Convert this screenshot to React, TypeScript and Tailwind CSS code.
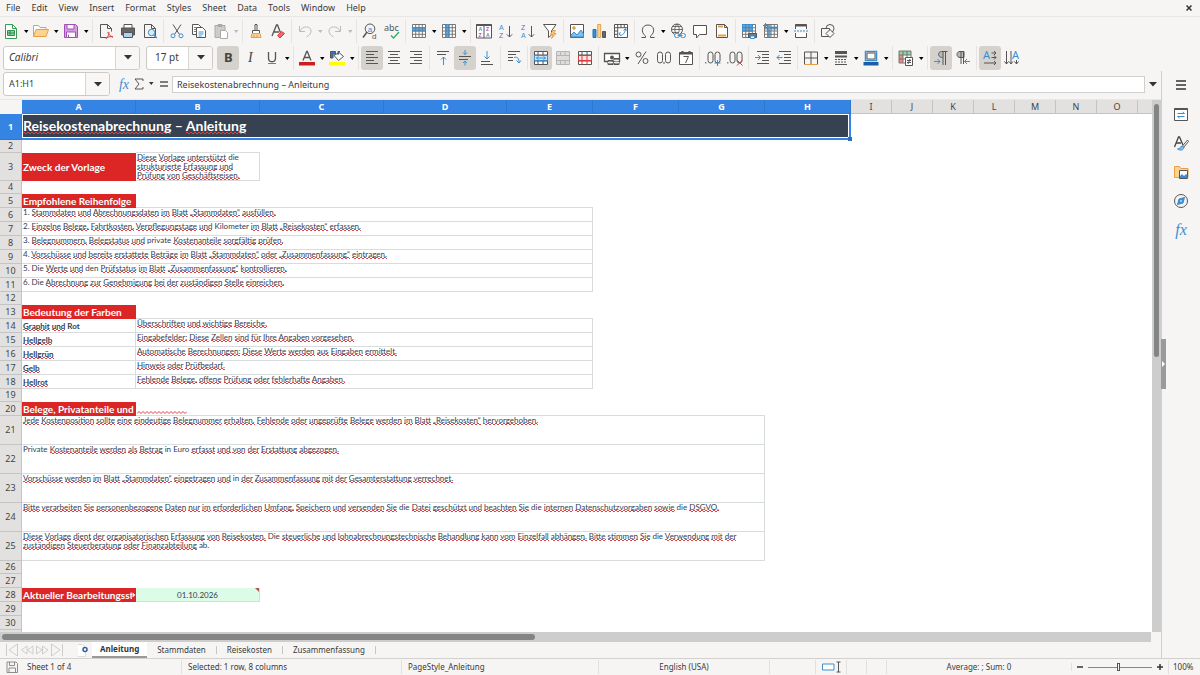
import React from "react";
import clsx from "clsx";

const GRAY = "#555555";
const BLUE = "#3a8fd1";
const ORANGE = "#e9a045";
const PURPLE = "#a04fb5";
const RED = "#dd3b3b";

interface Tool {
  icon: string;
  label: string;
  menu?: boolean;
  active?: boolean;
  disabled?: boolean;
}

interface Cell {
  text?: string;
  kind?: "title" | "heading" | "label" | "body" | "date" | "overflow";
  span?: number;
  clipped?: boolean;
}

interface Row {
  size: "tiny" | "normal" | "medium" | "tall" | "title";
  cells?: Cell[];
  top?: boolean;
}

const Grid = ({ color = GRAY }: { color?: string }) => (
  <path
    d="M1.5 1.5h13v13h-13zM4.7 1.5v13M8 1.5v13M11.3 1.5v13M1.5 4.7h13M1.5 8h13M1.5 11.3h13"
    stroke={color}
  />
);

const Letters = ({ top, bottom }: { top: string; bottom: string }) => (
  <g stroke="none" fontSize="7" fontFamily="Liberation Sans, sans-serif">
    <text x="1" y="6.500" fill={top === "A" ? BLUE : PURPLE}>
      {top}
    </text>
    <text x="1" y="15" fill={bottom === "A" ? BLUE : PURPLE}>
      {bottom}
    </text>
  </g>
);

const icons: Record<string, React.ReactNode> = {
  new: (
    <>
      <path d="M2.5 1.5h7l4 4v10h-11z" stroke="#3d9b58" fill="#fff" />
      <path d="M9.5 1.5v4h4" stroke="#3d9b58" />
      <path d="M4.5 7.5h7v5h-7zM4.5 10h7M7 7.500v5" stroke="#2f8f4b" fill="#8fd3a2" />
    </>
  ),
  open: (
    <>
      <path d="M.5 13.500v-11h5l1.500 2h6v2" stroke={ORANGE} fill="#fff" />
      <path d="M.5 13.500l2.500-7h12.500l-2.500 7z" stroke={ORANGE} fill="#fbd28f" />
    </>
  ),
  save: (
    <>
      <path d="M1.5 1.5h11l2 2v11h-13z" stroke={PURPLE} fill="#d69be3" />
      <path d="M4 1.500h7v4.500h-7z" stroke={PURPLE} fill="#fff" />
      <path d="M3.500 9h9v5.500h-9z" stroke={PURPLE} fill="#fff" />
      <path d="M5.500 11.500v3" stroke={PURPLE} />
    </>
  ),
  pdf: (
    <>
      <path d="M2.500 1.500h7l4 4v3M2.500 1.500v13h6M9.500 1.500v4h4" stroke={GRAY} />
      <path d="M8 15.500c3-3 3.500-6 2.500-6.500s-1 3 4.500 5c-3-1-5 0-7 1.500z" stroke={RED} />
    </>
  ),
  print: (
    <>
      <path d="M4 5v-3.500h8v3.500" stroke={GRAY} fill="#fff" />
      <path d="M1.500 5h13v7h-13z" stroke={GRAY} fill="#666" />
      <path d="M3.500 9.500h9v5h-9z" stroke={GRAY} fill="#a9d4f5" />
    </>
  ),
  preview: (
    <>
      <path d="M2.500 1.500h7l4 4v9h-11zM9.500 1.500v4h4" stroke={GRAY} />
      <circle cx="9.500" cy="9.500" r="3.200" stroke={BLUE} fill="#d7ebfa" />
      <path d="M11.800 12l3 3" stroke={BLUE} strokeWidth="1.500" />
    </>
  ),
  cut: (
    <>
      <path d="M4 1.500l6.500 10M12 1.500l-6.500 10" stroke={GRAY} />
      <circle cx="4" cy="12.800" r="2" stroke={BLUE} />
      <circle cx="12" cy="12.800" r="2" stroke={BLUE} />
    </>
  ),
  copy: (
    <>
      <path d="M1.500 1.500h6l3 3v7h-9z" stroke={GRAY} fill="#fff" />
      <path d="M5.500 4.500h6l3 3v7h-9z" stroke={GRAY} fill="#fff" />
      <path d="M7.500 9h5M7.500 11h5M7.500 13h3M3 4.500h2M3 6.500h2M3 8.500h2" stroke={BLUE} />
    </>
  ),
  paste: (
    <>
      <path d="M2 2.500h10v12h-10z" stroke="#aaa" fill="#ccc" />
      <path d="M5 1.500h4v2h-4z" stroke="#aaa" />
      <path d="M7.500 7.500h5l2 2v6h-7z" stroke="#aaa" fill="#fff" />
    </>
  ),
  brush: (
    <>
      <path d="M7 1.500h2v6h-2zM4.500 7.500h7v3h-7z" stroke={GRAY} fill="#fff" />
      <path d="M4 10.500h8l1 4h-10z" stroke={ORANGE} fill="#fbd28f" />
      <path d="M6 12v2.500M9 12v2.500" stroke={ORANGE} />
    </>
  ),
  clear: (
    <>
      <path d="M2 13l4.500-11h1l3.500 9M4 9h5" stroke={GRAY} strokeWidth="1.300" />
      <path d="M7.500 12.500l4-4 3 2-4.500 4.500z" stroke={RED} fill="#ef6a6a" />
    </>
  ),
  undo: <path d="M2.500 3v5.500h5.500M3 8c3-6 11-5 11 0 0 3-2 4-4.500 6" stroke="#bbb" />,
  redo: <path d="M13.500 3v5.500h-5.500M13 8c-3-6-11-5-11 0 0 3 2 4 4.500 6" stroke="#bbb" />,
  find: (
    <>
      <circle cx="8" cy="5.800" r="4.800" stroke={GRAY} />
      <path d="M5 9l-4 5.500" stroke={GRAY} strokeWidth="1.500" />
      <g stroke="none" fontSize="8" fontFamily="Liberation Sans, sans-serif">
        <text x="5.800" y="8.500" fill={BLUE}>a</text>
        <text x="10" y="16" fill={GRAY}>d</text>
      </g>
    </>
  ),
  spell: (
    <>
      <text x="0" y="8" fontSize="9" fill={GRAY} stroke="none" fontFamily="Noto Sans, sans-serif">
        abc
      </text>
      <path d="M7 12.500l2.500 2.500 5.500-6" stroke="#2fae6b" strokeWidth="1.300" />
    </>
  ),
  row: (
    <>
      <path d="M1.500 1.500h13v13h-13z" fill="#fff" stroke="none" />
      <path d="M1.500 4.700h13v3.300h-13z" fill="#5aaae6" stroke="none" />
      <Grid color="#777" />
      <path d="M1.500 4.700h13v3.300h-13z" stroke={BLUE} />
    </>
  ),
  column: (
    <>
      <path d="M1.500 1.500h13v13h-13z" fill="#fff" stroke="none" />
      <path d="M4.700 1.500h3.300v13h-3.300z" fill="#5aaae6" stroke="none" />
      <Grid color="#777" />
      <path d="M4.700 1.500h3.300v13h-3.300z" stroke={BLUE} />
    </>
  ),
  sort: (
    <>
      <path d="M.5 1.500h15v13.500h-15zM8 1.500v13.500" stroke={GRAY} fill="#fff" />
      <path d="M.5 2h15" stroke={GRAY} strokeWidth="2" />
      <g stroke="none" fontSize="5" fontWeight="700" fontFamily="Liberation Sans, sans-serif">
        <text x="2.500" y="7.800" fill={BLUE}>A</text>
        <text x="2.500" y="13.800" fill={PURPLE}>Z</text>
        <text x="10" y="7.800" fill={PURPLE}>Z</text>
        <text x="10" y="13.800" fill={BLUE}>A</text>
      </g>
    </>
  ),
  ascending: (
    <>
      <Letters top="A" bottom="Z" />
      <path d="M11.500 3v11M8.800 11.300l2.700 2.700 2.700-2.700" stroke={GRAY} />
    </>
  ),
  descending: (
    <>
      <Letters top="Z" bottom="A" />
      <path d="M11.500 3v11M8.800 11.300l2.700 2.700 2.700-2.700" stroke={GRAY} />
    </>
  ),
  filter: (
    <>
      <path d="M1.500 1.500h12.500l-4.500 6.500v4l-3 2.500v-6.500z" stroke={GRAY} fill="#fff" />
      <path d="M11 7.500l-2.500 4h2.500l-1.500 4 4.500-5h-2.500l2-3z" stroke={ORANGE} fill="#fbd28f" />
    </>
  ),
  image: (
    <>
      <path d="M1.500 1.500h13v13h-13z" stroke={GRAY} fill="#fff" />
      <path d="M2 14v-2l3-3 3 3 4-5 2.500 4v3z" fill="#7fbdec" stroke={BLUE} />
      <circle cx="5" cy="5" r="1.300" fill={ORANGE} stroke={ORANGE} />
    </>
  ),
  chart: (
    <>
      <path d="M2 6.500h3v8h-3z" fill={BLUE} stroke="#2a72ad" />
      <path d="M6.700 1.500h3v13h-3z" fill="#fbd28f" stroke={ORANGE} />
      <path d="M11.500 8.500h3v6h-3z" fill="#666" stroke={GRAY} />
    </>
  ),
  pivot: (
    <>
      <path d="M1.500 1.500h13v13h-13z" fill="#fff" stroke={GRAY} />
      <path d="M1.500 4.700h13M4.700 1.500v13M8 1.500v3M11.300 1.500v3M1.500 8h3M1.500 11.300h3" stroke={GRAY} />
      <path d="M6.500 11c0 2 5 2 6-5M10.500 7.500l2-2 1 2M7.500 9l-1.500 2 1.500 1.500" stroke={BLUE} />
    </>
  ),
  omega: (
    <path d="M1.500 14.500h4v-1.500c-5-3.500-4-11 2.500-11s7.500 7.500 2.500 11v1.500h4" stroke={GRAY} />
  ),
  link: (
    <>
      <circle cx="7" cy="6.500" r="5.500" stroke={GRAY} />
      <path d="M7 1c-3 4-3 7 0 11M7 1c3 4 3 7 0 11M1.500 6.500h11M2.500 3.500h9M2.500 9.500h6" stroke={GRAY} strokeWidth=".8" />
      <rect x="4.500" y="10.500" width="5" height="4" rx="2" stroke={BLUE} fill="#f6f5f4" />
      <rect x="10.500" y="10.500" width="5" height="4" rx="2" stroke={BLUE} fill="#f6f5f4" />
      <path d="M7.500 12.500h5" stroke={BLUE} />
    </>
  ),
  comment: <path d="M1.500 2.500h13v9h-7l-3 3.500v-3.500h-3z" stroke={GRAY} fill="#fff" />,
  header: (
    <>
      <path d="M2.500 1.500h8l3 3v10h-11zM10.500 1.500v3h3" stroke={GRAY} fill="#fff" />
      <path d="M4 3.500h5M4 12.500h8" stroke={ORANGE} strokeWidth="2" />
    </>
  ),
  printarea: (
    <>
      <path d="M1.500 1.500h13v13h-13z" fill="#fff" stroke="none" />
      <path d="M1.500 1.500h10v7h-10z" fill="#5aaae6" stroke="none" />
      <Grid color="#777" />
      <path d="M1.500 1.500h9.800v6.500h-9.800z" stroke={BLUE} />
      <path d="M7.500 10.500h8v4h-8z" fill="#777" stroke={GRAY} />
      <path d="M9.500 13h4v2.500h-4z" fill="#fff" stroke={BLUE} />
    </>
  ),
  freeze: (
    <>
      <path d="M1.500 1.500h13v13h-13z" fill="#fff" stroke="none" />
      <path d="M1.500 5h13M6 1.500v13" stroke="#5aaae6" strokeWidth="3" />
      <Grid color="#777" />
      <path d="M0 2.500h5M2.500 0v5" stroke={BLUE} />
    </>
  ),
  split: (
    <>
      <path d="M2.500 6v-4.500h11v4.500M2.500 10v4.500h11v-4.500" stroke={GRAY} fill="#fff" />
      <path d="M2.500 2.500h11" stroke={GRAY} strokeWidth="2" />
      <path d="M1 8h14" stroke={BLUE} strokeDasharray="2 1" />
    </>
  ),
  shapes: (
    <>
      <circle cx="10" cy="5.500" r="4" stroke={GRAY} />
      <path d="M1.500 5.500h8v8h-8z" stroke={GRAY} fill="#f6f5f4" />
      <path d="M10 6.500l4 4-4 4-4-4z" stroke={GRAY} fill="#f6f5f4" />
    </>
  ),
  left: <path d="M2 1.500h12M2 4.500h8M2 7.500h12M2 10.500h8M2 13.500h12" stroke={GRAY} />,
  center: <path d="M2 1.500h12M4 4.500h8M2 7.500h12M4 10.500h8M2 13.500h12" stroke={GRAY} />,
  right: <path d="M2 1.500h12M6 4.500h8M2 7.500h12M6 10.500h8M2 13.500h12" stroke={GRAY} />,
  top: (
    <>
      <path d="M2 1.500h12M2 4.500h9" stroke={GRAY} />
      <path d="M8.500 15v-8M6 9.500l2.500-2.500 2.500 2.500" stroke={BLUE} />
    </>
  ),
  middle: (
    <>
      <path d="M2 6.500h12M2 9.500h9" stroke={GRAY} />
      <path d="M8 0v4.500M6 2.500l2 2 2-2M8 15.500v-4.500M6 13l2-2 2 2" stroke={BLUE} />
    </>
  ),
  bottom: (
    <>
      <path d="M2 11.500h9M2 14.500h12" stroke={GRAY} />
      <path d="M8 1v8M5.500 6.500l2.500 2.500 2.500-2.500" stroke={BLUE} />
    </>
  ),
  wrap: (
    <>
      <path d="M2 1.500h12M2 4.500h8M2 7.500h5M2 10.500h5" stroke={GRAY} />
      <path d="M8 7.500c4-1 5 1 5 5.500M10.500 10.500l2.500 2.500 2-2.500" stroke={BLUE} />
    </>
  ),
  merge: (
    <>
      <path d="M1.500 1.500h13v13h-13zM1.500 5h13M1.500 11h13M5 1.500v3.500M10 1.500v3.500M5 11v3.500M10 11v3.500" stroke={GRAY} fill="#fff" />
      <path d="M1.500 5.500h13v5h-13z" fill="#cde6f9" stroke={BLUE} />
      <path d="M3.500 8h9M5.500 6.500l-2 1.500 2 1.500M10.500 6.500l2 1.500-2 1.500" stroke={BLUE} />
    </>
  ),
  mergecells: (
    <path d="M1.500 1.500h13v13h-13zM1.500 5.500h13M1.500 10.500h13M5.500 1.500v4M10 1.500v4M5.500 10.500v4M10 10.500v4" stroke="#b5b5b5" fill="#ddd" />
  ),
  unmerge: (
    <>
      <path d="M1.500 1.500h13v13h-13zM1.500 5h13M1.500 11h13M5 1.500v3.500M10 1.500v3.500" stroke={GRAY} fill="#fff" />
      <path d="M1.500 5.500h13v5h-13zM5 5.500v9M10 5.500v9" stroke={RED} fill="#fde3e3" />
    </>
  ),
  currency: (
    <>
      <path d="M.5 3.500h15v8h-15z" stroke={GRAY} fill="#fff" strokeWidth="1.300" />
      <circle cx="8" cy="7.500" r="2" fill={GRAY} stroke="none" />
      <path d="M4 10.500h5v4h-5zM10 8.500h5v6h-5z" fill="#999" stroke={GRAY} />
      <path d="M4 12.500h5M10 10.500h5M10 12.500h5" stroke="#eee" />
    </>
  ),
  date: (
    <>
      <path d="M1.500 2.500h13v12h-13z" stroke={GRAY} fill="#fff" />
      <path d="M1.500 3.500h13M4.500 1v3M11.500 1v3" stroke={GRAY} strokeWidth="2" />
      <path d="M5.500 6.500h5l-3 6.500" stroke={GRAY} />
    </>
  ),
  indent: (
    <>
      <path d="M3 1.500h12M8 4.500h7M8 7.500h7M8 10.500h7M3 13.500h12" stroke={GRAY} />
      <path d="M1 7.500h5.500M4 5l2.500 2.500-2.500 2.500" stroke={BLUE} />
    </>
  ),
  outdent: (
    <>
      <path d="M3 1.500h12M8 4.500h7M8 7.500h7M8 10.500h7M3 13.500h12" stroke={GRAY} />
      <path d="M6.500 7.500h-5.500M3.500 5l-2.500 2.500 2.500 2.500" stroke={BLUE} />
    </>
  ),
  borders: (
    <>
      <path d="M1.500 2v12.500M8 2v12.500M14.500 2v12.500M1.500 2h13M1.500 8h13" stroke={GRAY} />
      <path d="M1.500 14.500h13" stroke={ORANGE} />
    </>
  ),
  lines: (
    <>
      <path d="M2 2.500h12" stroke={GRAY} strokeWidth="3" />
      <path d="M2 6.500h12" stroke={GRAY} strokeWidth="2" />
      <path d="M2 9.500h12M2 12h12" stroke={GRAY} strokeDasharray="2 1" />
      <path d="M2 14.500h12" stroke={GRAY} />
    </>
  ),
  bordercolor: (
    <>
      <path d="M2.500 1.500h11v9h-11z" stroke={BLUE} strokeWidth="1.500" />
      <path d="M4 3h8v6h-8z" stroke={GRAY} fill="#fff" />
      <path d="M.5 12h15v3.500h-15z" fill="#1c5fa5" stroke="none" />
    </>
  ),
  conditional: (
    <>
      <path d="M1 1h12v12h-12z" fill="#fff" stroke="none" />
      <path d="M1 1h12v4h-12z" fill="#8fd3a2" stroke="none" />
      <path d="M1 5h4v8h-4z" fill="#ef8585" stroke="none" />
      <path d="M1 1h12v12h-12zM5 1v12M9 1v12M1 5h12M1 9h12" stroke="#777" />
      <path d="M7.500 7.500h7v8h-7z" fill="#fff" stroke={GRAY} />
      <path d="M9 10.500h4M9 12.500h4M12 9l-2 5" stroke={GRAY} />
    </>
  ),
  ltr: (
    <>
      <path d="M10.500 1.500h-2c-4 0-4 6 0 6h2z" fill="#bbb" stroke="none" />
      <path d="M14.500 1.500h-6c-4 0-4 6 1 6M10 2v13M12.500 2v13" stroke={GRAY} />
      <path d="M1 11.500h6M4.500 9l2.500 2.500-2.500 2.500" stroke={BLUE} />
    </>
  ),
  rtl: (
    <>
      <path d="M9 1.500h-4c-4 0-4 6 0 6h4z" fill="#bbb" stroke={GRAY} />
      <path d="M6 2v12M8.500 2v12" stroke={GRAY} />
      <path d="M15 11.500h-5.500M12 9l-2.500 2.500 2.500 2.500" stroke={BLUE} />
    </>
  ),
  horizontal: (
    <>
      <text x="1" y="9" fontSize="11" fill={BLUE} stroke="none" fontFamily="Noto Sans, sans-serif">A</text>
      <path d="M9.500 3h4.500M12 1l2 2-2 2M9.500 7.500h4.500M12 5.500l2 2-2 2M2 13h12M12 11l2 2-2 2" stroke={GRAY} />
    </>
  ),
  vertical: (
    <>
      <text x="8" y="9" fontSize="11" fill={BLUE} stroke="none" fontFamily="Noto Sans, sans-serif">A</text>
      <path d="M2.500 1v13M.5 11.500l2 2.500 2-2.500M7 1v13M5 11.500l2 2.500 2-2.500M12.500 10v4M10.500 11.500l2 2.500 2-2.500" stroke={GRAY} />
    </>
  ),
  highlight: (
    <>
      <path d="M5 5.500l5-3 4.500 4-5 4z" stroke={GRAY} fill="#fff" />
      <path d="M9 5v-3.500h2M1.500 1.500h5v2.500h-2.500v4h-2.500z" stroke={GRAY} fill="#2f7cc0" />
      <path d="M0 12h16v3.500h-16z" fill="#ffff00" stroke="none" />
    </>
  ),
  fontcolor: (
    <>
      <path d="M4 10.500l3.700-9h.6l3.700 9M5.500 7.500h5" stroke={GRAY} strokeWidth="1.300" />
      <path d="M0 12h16v3.500h-16z" fill="#c9211e" stroke="none" />
    </>
  ),
  underline: (
    <>
      <path d="M4.500 2v6c0 5 7 5 7 0v-6" stroke={GRAY} strokeWidth="1.300" />
      <path d="M4 13.500h8" stroke={BLUE} />
    </>
  ),
  bold: (
    <text x="4" y="12" fontSize="13" fontWeight="700" fill="#444" stroke="none" fontFamily="Noto Sans, sans-serif">B</text>
  ),
  italic: (
    <text x="6" y="12" fontSize="14" fontStyle="italic" fill="#444" stroke="none" fontFamily="Liberation Serif, serif">I</text>
  ),
  percent: (
    <>
      <circle cx="4.500" cy="4.500" r="2.500" stroke={GRAY} />
      <circle cx="11.500" cy="11" r="2.500" stroke={GRAY} />
      <path d="M12 1.500l-8 12.500" stroke={GRAY} />
    </>
  ),
  number: (
    <>
      <rect x="1.500" y="2" width="5" height="11" rx="2.500" stroke={GRAY} />
      <rect x="9.500" y="2" width="5" height="11" rx="2.500" stroke={GRAY} />
      <path d="M8 12v2" stroke={GRAY} />
    </>
  ),
  adddecimal: (
    <>
      <path d="M.8 12v1.500" stroke={GRAY} />
      <rect x="3" y="2" width="5" height="11" rx="2.500" stroke={GRAY} />
      <rect x="10" y="2" width="5" height="11" rx="2.500" stroke={GRAY} />
      <path d="M12.500 10v6M9.500 13h6" stroke={BLUE} />
    </>
  ),
  deldecimal: (
    <>
      <path d="M.8 12v1.500" stroke={GRAY} />
      <rect x="3" y="2" width="5" height="11" rx="2.500" stroke={GRAY} />
      <rect x="10" y="2" width="5" height="11" rx="2.500" stroke={GRAY} />
      <path d="M10 10l5.500 5.500M15.500 10l-5.500 5.500" stroke={RED} />
    </>
  ),
  menu: <path d="M3 4h10M3 8h10M3 12h10" stroke="#333" strokeWidth="1.500" />,
  properties: (
    <>
      <path d="M1.500 2.500h13v12h-13z" stroke={GRAY} fill="#fff" />
      <path d="M1.500 3h13" stroke={GRAY} strokeWidth="2" />
      <path d="M4.500 7.500h7l-2-1.500M11.500 10.500h-7l2 1.500" stroke={BLUE} />
    </>
  ),
  styles: (
    <>
      <path d="M1.500 12l4-10h1l3.500 8M3 8h5" stroke="#444" strokeWidth="1.300" />
      <path d="M14.500 5l-5 6 1 1.500 5-6z" stroke={GRAY} fill="#fff" />
      <path d="M9.500 11c-3 0-1.500 3-5 3 3 2 6 1 6.500-1.500z" stroke={BLUE} fill="#7fbdec" />
    </>
  ),
  gallery: (
    <>
      <path d="M1.500 13.500v-11h5l1.500 2h7v9z" stroke={ORANGE} fill="#fbd28f" />
      <path d="M6.500 6.500h8v8h-8z" stroke={GRAY} fill="#fff" />
      <path d="M7 14v-2l2-2 2 2 2-2 1.500 1.500v2.500z" fill={BLUE} stroke="none" />
    </>
  ),
  navigator: (
    <>
      <circle cx="8" cy="8" r="6.500" stroke={GRAY} />
      <path d="M11.500 4.500l-1.500 5.500-5.500 1.500 1.500-5.500z" fill={BLUE} stroke={BLUE} />
      <path d="M8 7l1 1-1 1-1-1z" fill="#fff" stroke="none" />
    </>
  ),
};

const toolbar: Tool[][] = [
  [
    { icon: "new", label: "New", menu: true },
    { icon: "open", label: "Open", menu: true },
    { icon: "save", label: "Save", menu: true },
  ],
  [
    { icon: "pdf", label: "Export as PDF" },
    { icon: "print", label: "Print" },
    { icon: "preview", label: "Print Preview" },
  ],
  [
    { icon: "cut", label: "Cut" },
    { icon: "copy", label: "Copy" },
    { icon: "paste", label: "Paste", menu: true, disabled: true },
  ],
  [
    { icon: "brush", label: "Clone Formatting" },
    { icon: "clear", label: "Clear Direct Formatting" },
  ],
  [
    { icon: "undo", label: "Undo", menu: true, disabled: true },
    { icon: "redo", label: "Redo", menu: true, disabled: true },
  ],
  [
    { icon: "find", label: "Find and Replace" },
    { icon: "spell", label: "Spelling" },
  ],
  [
    { icon: "row", label: "Row", menu: true },
    { icon: "column", label: "Column", menu: true },
  ],
  [
    { icon: "sort", label: "Sort" },
    { icon: "ascending", label: "Sort Ascending" },
    { icon: "descending", label: "Sort Descending" },
    { icon: "filter", label: "AutoFilter" },
  ],
  [
    { icon: "image", label: "Insert Image" },
    { icon: "chart", label: "Insert Chart" },
    { icon: "pivot", label: "Insert Pivot Table" },
  ],
  [
    { icon: "omega", label: "Special Character", menu: true },
    { icon: "link", label: "Insert Hyperlink" },
    { icon: "comment", label: "Insert Comment" },
    { icon: "header", label: "Headers and Footers" },
  ],
  [
    { icon: "printarea", label: "Define Print Area" },
    { icon: "freeze", label: "Freeze Rows and Columns", menu: true },
    { icon: "split", label: "Split Window" },
  ],
  [{ icon: "shapes", label: "Show Draw Functions" }],
];

const formatting: Tool[][] = [
  [
    { icon: "bold", label: "Bold", active: true },
    { icon: "italic", label: "Italic" },
    { icon: "underline", label: "Underline", menu: true },
  ],
  [
    { icon: "fontcolor", label: "Font Color", menu: true },
    { icon: "highlight", label: "Background Color", menu: true },
  ],
  [
    { icon: "left", label: "Align Left", active: true },
    { icon: "center", label: "Center Horizontally" },
    { icon: "right", label: "Align Right" },
  ],
  [
    { icon: "top", label: "Align Top" },
    { icon: "middle", label: "Center Vertically", active: true },
    { icon: "bottom", label: "Align Bottom" },
  ],
  [{ icon: "wrap", label: "Wrap Text" }],
  [
    { icon: "merge", label: "Merge and Center Cells", active: true },
    { icon: "mergecells", label: "Merge Cells", disabled: true },
    { icon: "unmerge", label: "Unmerge Cells" },
  ],
  [
    { icon: "currency", label: "Format as Currency", menu: true },
    { icon: "percent", label: "Format as Percent" },
    { icon: "number", label: "Format as Number" },
    { icon: "date", label: "Format as Date" },
  ],
  [
    { icon: "adddecimal", label: "Add Decimal Place" },
    { icon: "deldecimal", label: "Delete Decimal Place" },
  ],
  [
    { icon: "indent", label: "Increase Indent" },
    { icon: "outdent", label: "Decrease Indent" },
  ],
  [
    { icon: "borders", label: "Borders", menu: true },
    { icon: "lines", label: "Border Style", menu: true },
    { icon: "bordercolor", label: "Border Color", menu: true },
  ],
  [{ icon: "conditional", label: "Conditional", menu: true }],
  [
    { icon: "ltr", label: "Left-To-Right", active: true },
    { icon: "rtl", label: "Right-To-Left" },
  ],
  [
    { icon: "horizontal", label: "Text Direction Horizontal", active: true },
    { icon: "vertical", label: "Text Direction Vertical" },
  ],
];

const empty: Row = { size: "tiny" };
const step = (text: string): Row => ({ size: "normal", cells: [{ kind: "body", text, span: 5 }] });
const legend = (label: string, text: string): Row => ({
  size: "normal",
  cells: [
    { kind: "label", text: label },
    { kind: "body", text, span: 4 },
  ],
});
const note = (text: string): Row => ({ size: "tall", cells: [{ kind: "body", text, span: 7 }] });

const rows: Row[] = [
  { size: "title", cells: [{ kind: "title", text: "Reisekostenabrechnung – Anleitung", span: 8 }] },
  empty,
  {
    size: "medium",
    top: true,
    cells: [
      { kind: "heading", text: "Zweck der Vorlage" },
      { kind: "body", text: "Diese Vorlage unterstützt die strukturierte Erfassung und Prüfung von Geschäftsreisen." },
    ],
  },
  empty,
  { size: "normal", cells: [{ kind: "heading", text: "Empfohlene Reihenfolge" }] },
  { ...step("1. Stammdaten und Abrechnungsdaten im Blatt „Stammdaten“ ausfüllen."), top: true },
  step("2. Einzelne Belege, Fahrtkosten, Verpflegungstage und Kilometer im Blatt „Reisekosten“ erfassen."),
  step("3. Belegnummern, Belegstatus und private Kostenanteile sorgfältig prüfen."),
  step("4. Vorschüsse und bereits erstattete Beträge im Blatt „Stammdaten“ oder „Zusammenfassung“ eintragen."),
  step("5. Die Werte und den Prüfstatus im Blatt „Zusammenfassung“ kontrollieren."),
  step("6. Die Abrechnung zur Genehmigung bei der zuständigen Stelle einreichen."),
  empty,
  { size: "normal", cells: [{ kind: "heading", text: "Bedeutung der Farben" }] },
  { ...legend("Graphit und Rot", "Überschriften und wichtige Bereiche."), top: true },
  legend("Hellgelb", "Eingabefelder: Diese Zellen sind für Ihre Angaben vorgesehen."),
  legend("Hellgrün", "Automatische Berechnungen: Diese Werte werden aus Eingaben ermittelt."),
  legend("Gelb", "Hinweis oder Prüfbedarf."),
  legend("Hellrot", "Fehlende Belege, offene Prüfung oder fehlerhafte Angaben."),
  empty,
  { size: "normal", cells: [{ kind: "heading", text: "Belege, Privatanteile und" }, { kind: "overflow" }] },
  {
    ...note("Jede Kostenposition sollte eine eindeutige Belegnummer erhalten. Fehlende oder ungeprüfte Belege werden im Blatt „Reisekosten“ hervorgehoben."),
    top: true,
  },
  note("Private Kostenanteile werden als Betrag in Euro erfasst und von der Erstattung abgezogen."),
  note("Vorschüsse werden im Blatt „Stammdaten“ eingetragen und in der Zusammenfassung mit der Gesamterstattung verrechnet."),
  note("Bitte verarbeiten Sie personenbezogene Daten nur im erforderlichen Umfang. Speichern und versenden Sie die Datei geschützt und beachten Sie die internen Datenschutzvorgaben sowie die DSGVO."),
  note("Diese Vorlage dient der organisatorischen Erfassung von Reisekosten. Die steuerliche und lohnabrechnungstechnische Behandlung kann vom Einzelfall abhängen. Bitte stimmen Sie die Verwendung mit der zuständigen Steuerberatung oder Finanzabteilung ab."),
  empty,
  { size: "normal" },
  { size: "normal", cells: [{ kind: "heading", text: "Aktueller Bearbeitungsst", clipped: true }, { kind: "date", text: "01.10.2026" }] },
  { size: "normal" },
  { size: "normal" },
  { size: "normal" },
];

const rowSize = {
  tiny: "h-[13px]",
  normal: "h-[14px]",
  medium: "h-[28px]",
  tall: "h-[29px]",
  title: "h-[26px]",
};

// Words the English dictionary accepts, everything else gets a wavy line
const known = new Set(["die", "den", "private", "kilometer", "in", "euro", "ab", "rot"]);

const Spelled = ({ text }: { text: string }) => (
  <>
    {text.split(" ").map((word, i) => {
      const plain = word.toLowerCase().replace(/[^a-zäöüß]/g, "");
      const wrong = plain.length > 0 && !known.has(plain);
      return (
        <React.Fragment key={i}>
          {i > 0 && " "}
          {wrong ? (
            <span className="bg-[linear-gradient(90deg,#e04444_50%,transparent_50%),linear-gradient(90deg,transparent_50%,#e04444_50%)] bg-[length:4px_1px] bg-[position:left_bottom_1px,left_bottom] bg-repeat-x">
              {word}
            </span>
          ) : (
            word
          )}
        </React.Fragment>
      );
    })}
  </>
);

const Icon = ({ name }: { name: string }) => (
  <svg viewBox="0 0 16 16" className="size-4 shrink-0 overflow-visible" fill="none" aria-hidden="true">
    {icons[name]}
  </svg>
);

const Caret = () => (
  <svg viewBox="0 0 6 4" className="h-1 w-1.5" aria-hidden="true">
    <path d="M1 0h4.500L3.300 3z" fill="currentColor" />
  </svg>
);

const BigCaret = () => (
  <svg viewBox="0 0 8 5" className="h-[5px] w-2" aria-hidden="true">
    <path d="M0 0h8L4 4.500z" fill="#333" />
  </svg>
);

const Tools = ({ groups }: { groups: Tool[][] }) => (
  <div className="flex items-center">
    {groups.map((group, i) => (
      <React.Fragment key={i}>
        {i > 0 && <div className="mx-0.5 h-6 w-px bg-[#e6e4e2]" />}
        {group.map((tool) => (
          <div key={tool.label} className="flex items-center">
            <button
              type="button"
              aria-label={tool.label}
              disabled={tool.disabled}
              className={clsx(
                "flex h-6 w-[22px] items-center justify-center rounded-[3px]",
                tool.active && "bg-[#d5d1cd]",
              )}
            >
              <Icon name={tool.icon} />
            </button>
            {tool.menu && (
              <button
                type="button"
                aria-label={`${tool.label} options`}
                disabled={tool.disabled}
                className={clsx("flex h-6 w-2 items-center justify-center pt-0.5", tool.disabled ? "text-[#bbb]" : "text-black")}
              >
                <Caret />
              </button>
            )}
          </div>
        ))}
      </React.Fragment>
    ))}
  </div>
);

const Combo = ({ label, value, className, inputClass }: { label: string; value: string; className: string; inputClass?: string }) => (
  <div className={clsx("flex h-6 shrink-0 overflow-hidden rounded-[3px] border border-[#cdc9c5] bg-white", className)}>
    <input aria-label={label} defaultValue={value} className={clsx("w-0 flex-1 outline-none", inputClass)} />
    <button
      type="button"
      aria-label={`${label} list`}
      className="flex w-6 items-center justify-center border-l border-[#d8d5d2] bg-[#f8f7f6]"
    >
      <BigCaret />
    </button>
  </div>
);

const SheetCell = ({ cell, top }: { cell: Cell; top?: boolean }) => {
  const border = clsx("border-r border-b border-[#d9dcdd]", top && "shadow-[0_-1px_0_#d9dcdd]");

  switch (cell.kind) {
    case "title":
      return (
        <td colSpan={cell.span} className="relative bg-[#3584e4] p-0">
          <div className="mr-0.5 mb-0.5 h-6 border border-white bg-[#364152] text-[14px] leading-[22px] font-bold text-white">
            <Spelled text={cell.text ?? ""} />
          </div>
          <span className="absolute -right-px -bottom-px size-1 bg-[#2a6fc4]" />
        </td>
      );
    case "heading":
      return (
        <td className="relative overflow-hidden bg-[#dc2626] px-px py-0 text-[10px] leading-[12px] font-bold whitespace-nowrap text-white">
          {cell.text}
          {cell.clipped && (
            <svg viewBox="0 0 4 8" className="absolute top-[3px] right-0 h-2 w-1" aria-hidden="true">
              <path d="M0 0h4v8H0z" fill="#dc2626" />
              <path d="M.5 1.500L3.500 4 .5 6.500z" fill="#fff" />
            </svg>
          )}
        </td>
      );
    case "label":
      return (
        <td className={clsx(border, "px-px py-0 text-[8px] leading-[10px] font-bold")}>
          <Spelled text={cell.text ?? ""} />
        </td>
      );
    case "date":
      return (
        <td className={clsx(border, "relative bg-[#dcfce7] p-0 text-center text-[8px] leading-[10px]")}>
          {cell.text}
          <svg viewBox="0 0 4 4" className="absolute top-0 right-0 size-1" aria-hidden="true">
            <path d="M0 0h4v4z" fill="#b4534f" />
          </svg>
        </td>
      );
    case "overflow":
      return (
        <td className="px-px py-0 align-bottom">
          <svg viewBox="0 0 50 3" className="mb-0.5 h-[3px] w-[50px]" fill="none" aria-hidden="true">
            <path
              d="M0 2.500l2-2 2 2 2-2 2 2 2-2 2 2 2-2 2 2 2-2 2 2 2-2 2 2 2-2 2 2 2-2 2 2 2-2 2 2 2-2 2 2 2-2 2 2 2-2 2 2 2-2"
              stroke="#e04444"
            />
          </svg>
        </td>
      );
    default:
      return (
        <td colSpan={cell.span} className={clsx(border, "px-px py-0 align-top text-[8px] leading-[9px]")}>
          <Spelled text={cell.text ?? ""} />
        </td>
      );
  }
};

const columns = ["A", "B", "C", "D", "E", "F", "G", "H", "I", "J", "K", "L", "M", "N", "O"];
const columnWidths = [
  "w-[114px]",
  "w-[124px]",
  "w-[124px]",
  "w-[123px]",
  "w-[86px]",
  "w-[86px]",
  "w-[86px]",
  "w-[86px]",
];

const Sheet = () => (
  <table className="w-full table-fixed border-separate border-spacing-0 font-[Lato,sans-serif] text-[#344050]">
    <colgroup>
      <col className="w-[22px]" />
      {columns.map((name, i) => (
        <col key={name} className={columnWidths[i] ?? "w-[41px]"} />
      ))}
      <col />
    </colgroup>
    <thead className="font-['Noto_Sans',sans-serif] text-[9px] leading-[12px]">
      <tr className="h-[14px]">
        <td className="bg-[#f6f5f4] p-0" />
        {columns.map((name, i) => (
          <th
            key={name}
            className={clsx(
              "border-r border-b p-0",
              i < 8
                ? "border-[#2f78d0] bg-[#3584e4] font-bold text-white"
                : "border-[#c4c4c4] bg-[#e2e1e0] font-normal text-[#444]",
            )}
          >
            {name}
          </th>
        ))}
        <td className="border-b border-[#c4c4c4] bg-[#e2e1e0] p-0" />
      </tr>
    </thead>
    <tbody>
      {rows.map((row, i) => {
        const used = (row.cells ?? []).reduce((sum, cell) => sum + (cell.span ?? 1), 0);
        return (
          <tr key={i} className={rowSize[row.size]}>
            <th
              className={clsx(
                "border-r border-b p-0 font-['Noto_Sans',sans-serif] text-[9px] leading-[12px]",
                i === 0
                  ? "border-[#2f78d0] bg-[#3584e4] font-bold text-white"
                  : "border-[#c4c4c4] bg-[#e2e1e0] font-normal text-[#444]",
              )}
            >
              {i + 1}
            </th>
            {row.cells?.map((cell, j) => <SheetCell key={j} cell={cell} top={row.top} />)}
            <td colSpan={16 - used} className="p-0" />
          </tr>
        );
      })}
    </tbody>
  </table>
);

const sheetNav = [
  { label: "First sheet", d: "M1.500 1v12M12.500 1L4 7l8.500 6z" },
  { label: "Previous sheet", d: "M7 3L1.500 7 7 11zM13 3L7.500 7l5.500 4z" },
  { label: "Next sheet", d: "M1.500 3L7 7l-5.500 4zM7.500 3L13 7l-5.500 4z" },
  { label: "Last sheet", d: "M12.500 1v12M1.500 1L10 7l-8.500 6z" },
];

const TabBar = () => (
  <div className="flex h-4 shrink-0 items-stretch text-[8px] leading-[14px]">
    <div className="flex w-[78px] items-center gap-px pl-[5px]">
      {sheetNav.map(({ label, d }) => (
        <button key={label} type="button" disabled aria-label={label}>
          <svg viewBox="0 0 14 14" className="size-3.5" fill="none" aria-hidden="true">
            <path d={d} stroke="#cfcdcb" />
          </svg>
        </button>
      ))}
    </div>
    <button type="button" aria-label="Add sheet" className="w-3.5">
      <svg viewBox="0 0 14 14" className="size-3.5" fill="none" aria-hidden="true">
        <path d="M-2.500 1.500h7l3 3v9h-10z" fill="#fff" stroke="#ddd" />
        <circle cx="7" cy="6.500" r="2" fill="#fff" stroke="#2c5fa8" strokeWidth="1.500" />
      </svg>
    </button>
    <button type="button" className="border-b-2 border-[#999] bg-white px-2 font-bold text-[#333]">
      Anleitung
    </button>
    {["Stammdaten", "Reisekosten", "Zusammenfassung"].map((name) => (
      <button key={name} type="button" className="flex items-center pl-2.5">
        {name}
        <span className="ml-2.5 h-2 w-px bg-[#c8c5c2]" />
      </button>
    ))}
  </div>
);

const StatusBar = () => (
  <footer className="grid h-[17px] shrink-0 grid-cols-[181fr_220fr_197fr_171fr_46fr_31fr_20fr_20fr_185fr_97fr_32fr] items-center border-t border-[#d3d1cf] text-[8px] leading-[14px] whitespace-nowrap [&>*+*]:border-l [&>*+*]:border-[#e2e0de]">
    <div className="flex items-center gap-[9px] pl-1.5">
      <svg viewBox="0 0 12 12" className="size-3" fill="none" aria-hidden="true">
        <path d="M1 1h9l1.500 1.500v9h-10.500zM3.500 1v3.500h5v-3.500M3 11.500v-4.500h6.500v4.500" stroke="#8d8d8d" />
      </svg>
      Sheet 1 of 4
    </div>
    <div className="pl-1.5">Selected: 1 row, 8 columns</div>
    <div className="pl-1.5">PageStyle_Anleitung</div>
    <div className="text-center">English (USA)</div>
    <div className="h-3.5" />
    <div className="flex h-3.5 items-center pl-1.5">
      <svg viewBox="0 0 20 12" className="h-3 w-5" fill="none" aria-hidden="true">
        <path d="M.5 3h11.500v6H.5z" fill="#fff" stroke={BLUE} />
        <path d="M14.500 1h4M16.500 1v10M14.500 11h4" stroke={GRAY} />
      </svg>
    </div>
    <div className="h-3.5" />
    <div className="h-3.5" />
    <div className="text-center">Average: ; Sum: 0</div>
    <div className="flex items-center gap-1 px-1">
      <button type="button" aria-label="Zoom out">
        <svg viewBox="0 0 8 8" className="size-2" aria-hidden="true">
          <path d="M1 4h6" stroke="#333" strokeWidth="1.500" />
        </svg>
      </button>
      <input
        type="range"
        aria-label="Zoom"
        defaultValue="48"
        className="h-2 w-0 flex-1 appearance-none bg-[linear-gradient(#888,#888)] bg-[length:100%_1px] bg-center bg-no-repeat [&::-webkit-slider-thumb]:h-2 [&::-webkit-slider-thumb]:w-[3px] [&::-webkit-slider-thumb]:appearance-none [&::-webkit-slider-thumb]:border [&::-webkit-slider-thumb]:border-[#555] [&::-webkit-slider-thumb]:bg-white"
      />
      <button type="button" aria-label="Zoom in">
        <svg viewBox="0 0 8 8" className="size-2" aria-hidden="true">
          <path d="M1 4h6M4 1v6" stroke="#333" strokeWidth="1.500" />
        </svg>
      </button>
    </div>
    <div className="pl-1">100%</div>
  </footer>
);

const App = () => {
  return (
    <div className="flex h-screen flex-col overflow-hidden bg-[#f6f5f4] font-['Noto_Sans',sans-serif] text-[#3a3a3a]">
      {/* Menu */}
      <nav className="flex h-[17px] shrink-0 items-center gap-[11px] border-b border-[#e8e6e4] px-1.5 text-[9px]">
        {["File", "Edit", "View", "Insert", "Format", "Styles", "Sheet", "Data", "Tools", "Window", "Help"].map((name) => (
          <button key={name} type="button">
            {name}
          </button>
        ))}
        <button type="button" aria-label="Close document" className="ml-auto pr-0.5">
          <svg viewBox="0 0 6 6" className="size-1.5" aria-hidden="true">
            <path d="M.5.5l5 5M5.500.5l-5 5" stroke="#333" strokeWidth="1.500" />
          </svg>
        </button>
      </nav>

      {/* Toolbars */}
      <div className="flex h-[27px] shrink-0 items-center">
        <Tools groups={toolbar} />
      </div>
      <div className="flex h-[27px] shrink-0 items-center pl-[3px]">
        <Combo label="Font name" value="Calibri" className="mr-1.5 w-[137px]" inputClass="px-[5px] text-[10px] italic" />
        <Combo label="Font size" value="17 pt" className="mr-1 w-[67px]" inputClass="px-2 text-[10px]" />
        <Tools groups={formatting} />
      </div>

      <div className="flex min-h-0 flex-1">
        <main className="flex min-w-0 flex-1 flex-col">
          {/* Formula bar */}
          <div className="flex h-[29px] shrink-0 items-center border-b border-[#dcebf8] pb-0.5 pl-[3px]">
            <Combo label="Name box" value="A1:H1" className="mr-1 w-[107px]" inputClass="px-[5px] text-[9px]" />
            <button type="button" aria-label="Function wizard" className="w-5 font-['Liberation_Serif',serif] text-[14px] text-[#3a8fd1] italic">
              fx
            </button>
            <button type="button" aria-label="Select function" className="flex items-center gap-1 text-[#333]">
              <svg viewBox="0 0 10 12" className="h-3 w-2.5" fill="none" aria-hidden="true">
                <path d="M9 3V1H1l4 5-4 5h8V9" stroke={GRAY} />
              </svg>
              <Caret />
            </button>
            <button type="button" aria-label="Formula" className="mr-1 ml-1.5">
              <svg viewBox="0 0 8 6" className="h-1.5 w-2" aria-hidden="true">
                <path d="M0 1h8M0 5h8" stroke={GRAY} strokeWidth="1.500" />
              </svg>
            </button>
            <input
              aria-label="Input line"
              defaultValue="Reisekostenabrechnung – Anleitung"
              className="h-[17px] w-0 flex-1 border border-[#cfcfcf] bg-white px-1 text-[9px] outline-none"
            />
            <button type="button" aria-label="Expand formula bar" className="flex w-4 justify-center">
              <BigCaret />
            </button>
          </div>

          <div className="flex min-h-0 flex-1 bg-white">
            <div className="min-w-0 flex-1 overflow-hidden">
              <Sheet />
            </div>
            <div className="w-[9px] shrink-0 bg-[#cdcdcd] px-0.5 pt-1">
              <div className="h-[48%] rounded-full bg-[#838584]" />
            </div>
          </div>

          <div className="mr-2.5 h-2.5 shrink-0 bg-[#cdcdcd] px-0.5 py-0.5">
            <div className="h-full w-[46.500%] rounded-full bg-[#838584]" />
          </div>

          <TabBar />
        </main>

        {/* Sidebar */}
        <aside className="relative flex w-[39px] shrink-0 flex-col items-center gap-[13px] border-l border-[#d0cecc] pt-1.5">
          {["menu", "properties", "styles", "gallery", "navigator"].map((name) => (
            <button key={name} type="button" aria-label={name}>
              <Icon name={name} />
            </button>
          ))}
          <button type="button" aria-label="functions" className="font-['Liberation_Serif',serif] text-[16px] leading-4 text-[#3a8fd1] italic">
            fx
          </button>
          <div className="absolute top-[268px] -left-px flex h-[50px] w-[5px] items-center bg-[#999b9a]">
            <svg viewBox="0 0 5 6" className="h-1.5 w-[5px]" aria-hidden="true">
              <path d="M1 0l3 3-3 3z" fill="#fff" />
            </svg>
          </div>
        </aside>
      </div>

      <StatusBar />
    </div>
  );
};

export default App;
